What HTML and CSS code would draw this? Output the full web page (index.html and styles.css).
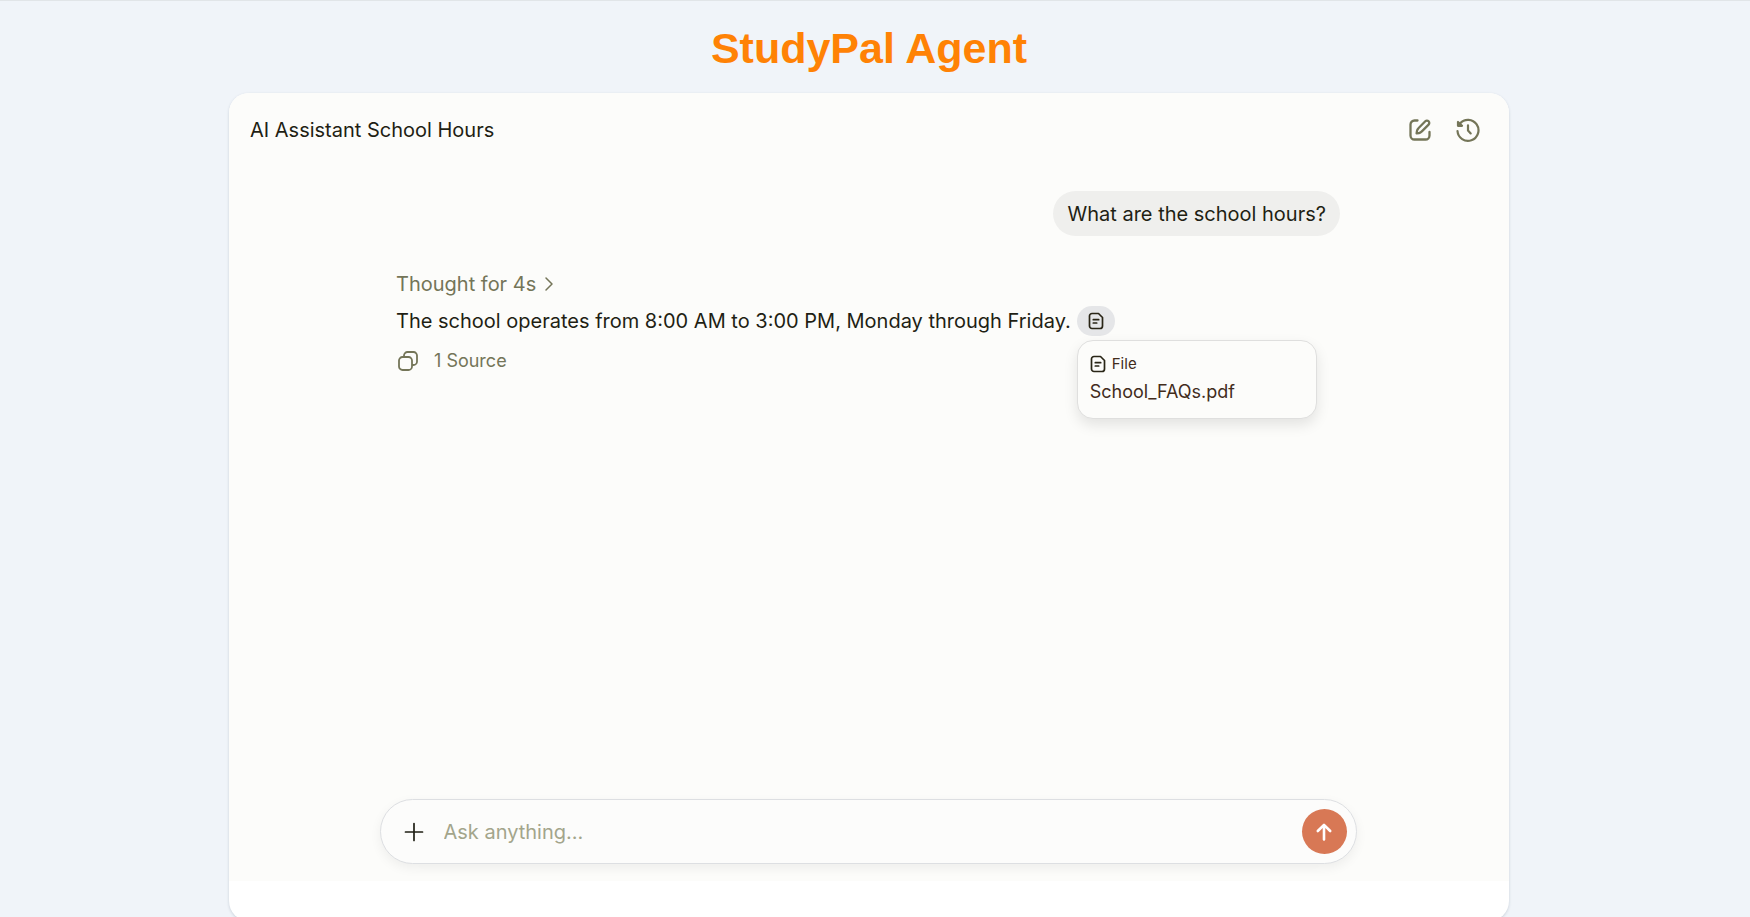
FILE: index.html
```html
<!DOCTYPE html>
<html lang="en">
<head>
<meta charset="utf-8">
<meta name="viewport" content="width=device-width, initial-scale=1">
<title>StudyPal Agent</title>
<link rel="stylesheet" href="styles.css">
</head>
<body>
<div class="page">
  <h1 class="page-title">StudyPal Agent</h1>
  <main class="card">
    <div class="chat">
      <header class="chat-header">
        <h2 class="chat-title">AI Assistant School Hours</h2>
        <div class="chat-actions">
          <button class="icon-button" type="button" aria-label="New chat">
            <svg width="24" height="24" viewBox="0 0 24 24" fill="none" stroke="currentColor" stroke-width="2.300" stroke-linecap="round" stroke-linejoin="round"><path d="M9.500 2.500H6.500a4 4 0 0 0-4 4v11a4 4 0 0 0 4 4h11a4 4 0 0 0 4-4v-3.500"/><path d="M17.300 3.300a2.300 2.300 0 0 1 3.300 3.300L13.600 13.600a4.500 4.500 0 0 1-2.500 1.400L8.600 15.400l.4-2.500a4.500 4.500 0 0 1 1.400-2.600Z"/></svg>
          </button>
          <button class="icon-button" type="button" aria-label="Chat history">
            <svg width="24" height="24" viewBox="0 0 24 24" fill="none" stroke="currentColor" stroke-width="2.200" stroke-linecap="round" stroke-linejoin="round"><path d="M1.500 13a10.500 10.500 0 1 0 2.500-7.500"/><path d="M2 4v3.800h4z" fill="currentColor"/><path d="M12 7.300v5.200l2.700 2.900"/></svg>
          </button>
        </div>
      </header>
      <section class="thread">
        <p class="bubble">What are the school hours?</p>
        <article class="reply">
          <button class="thought" type="button">Thought for 4s
            <svg width="10" height="16" viewBox="0 0 10 16" fill="none" stroke="currentColor" stroke-width="1.500" stroke-linecap="round" stroke-linejoin="round"><path d="M2 2l6 6-6 6"/></svg>
          </button>
          <div class="answer">
            <p class="answer-text">The school operates from 8:00 AM to 3:00 PM, Monday through Friday.</p>
            <div class="citation">
              <button class="chip" type="button" aria-label="Source file">
                <svg class="file-icon" width="16" height="18" viewBox="0 0 16 18" fill="none" stroke="currentColor" stroke-width="1.700" stroke-linecap="round" stroke-linejoin="round"><path d="M4 1.500h6.500l4 4V14a2.500 2.500 0 0 1-2.500 2.500H4A2.500 2.500 0 0 1 1.500 14V4A2.500 2.500 0 0 1 4 1.500Z"/><path d="M5.300 7.700h5.400M5.300 11h3.400"/></svg>
              </button>
              <div class="popover">
                <div class="popover-kind">
                  <svg class="file-icon" width="16" height="18" viewBox="0 0 16 18" fill="none" stroke="currentColor" stroke-width="1.700" stroke-linecap="round" stroke-linejoin="round"><path d="M4 1.500h6.500l4 4V14a2.500 2.500 0 0 1-2.500 2.500H4A2.500 2.500 0 0 1 1.500 14V4A2.500 2.500 0 0 1 4 1.500Z"/><path d="M5.300 7.700h5.400M5.300 11h3.400"/></svg>
                  File
                </div>
                <div class="popover-name">School_FAQs.pdf</div>
              </div>
            </div>
          </div>
          <div class="reply-tools">
            <button class="tool-button" type="button" aria-label="Copy">
              <svg width="20" height="20" viewBox="0 0 20 20" fill="none" stroke="currentColor" stroke-width="1.800" stroke-linejoin="round"><rect x="1" y="6" width="13" height="13" rx="3.500"/><path d="M6 6V4.500A3.500 3.500 0 0 1 9.500 1h6A3.500 3.500 0 0 1 19 4.500v6a3.500 3.500 0 0 1-3.500 3.500H14"/></svg>
            </button>
            <button class="tool-button" type="button">1 Source</button>
          </div>
        </article>
      </section>
      <form class="composer">
        <button class="add" type="button" aria-label="Add attachment">
          <svg width="20" height="20" viewBox="0 0 20 20" fill="none" stroke="currentColor" stroke-width="1.700" stroke-linecap="round"><path d="M10 1.500v17M1.500 10h17"/></svg>
        </button>
        <input class="prompt" type="text" placeholder="Ask anything..." aria-label="Message">
        <button class="send" type="button" aria-label="Send">
          <svg width="20" height="20" viewBox="0 0 20 20" fill="none" stroke="currentColor" stroke-width="2.600" stroke-linecap="round" stroke-linejoin="round"><path d="M10 17.500V3M3.800 9L10 2.800 16.200 9"/></svg>
        </button>
      </form>
    </div>
  </main>
</div>
</body>
</html>
```
FILE: styles.css
```css
* {
  box-sizing: border-box;
}

body {
  margin: 0;
  background: #f0f4f9;
  color: #1f1f14;
  font-family: Inter, "Liberation Sans", sans-serif;
  font-size: 20px;
  line-height: 28px;
  overflow: hidden;
}

h1, h2, p {
  margin: 0;
}

button {
  display: flex;
  align-items: center;
  justify-content: center;
  padding: 0;
  border: 0;
  background: none;
  color: inherit;
  font: inherit;
  cursor: pointer;
}

svg {
  display: block;
  flex: none;
}

.page {
  display: flex;
  flex-direction: column;
  align-items: center;
  min-height: 100vh;
  padding: 23px 12px 0 0;
  border-top: 1px solid #e1e5e8;
}

.page-title {
  margin-bottom: 21px;
  color: #ff8205;
  font-family: "Liberation Sans", Arial, sans-serif;
  font-size: 43px;
  font-weight: 700;
  line-height: 48px;
}

.card {
  width: 100%;
  max-width: 1280px;
  padding-bottom: 40px;
  border-radius: 20px;
  background: #fff;
  box-shadow: 0 1px 3px rgba(30, 50, 80, 0.18);
  overflow: hidden;
}

.chat {
  display: flex;
  flex-direction: column;
  min-height: 788px;
  padding: 0 2px 17px 0;
  background: #fcfcfa;
}

.chat-header {
  display: flex;
  align-items: center;
  justify-content: space-between;
  height: 74px;
  padding: 0 19px 0 21px;
}

.chat-title {
  font-size: 20px;
  font-weight: 400;
}

.chat-actions {
  display: flex;
  gap: 8px;
}

.icon-button {
  width: 40px;
  height: 40px;
  color: #747558;
}

.thread {
  display: flex;
  flex: 1;
  flex-direction: column;
  width: 100%;
  max-width: 944px;
  margin: 0 auto;
  padding-top: 24px;
}

.bubble {
  align-self: flex-end;
  padding: 9px 14px 8px;
  border-radius: 23px;
  background: #efefed;
}

.reply {
  display: flex;
  flex-direction: column;
  align-items: flex-start;
  gap: 8px;
  padding-top: 34px;
}

.thought {
  gap: 8px;
  color: #747558;
}

.answer {
  display: flex;
  align-items: center;
  gap: 6px;
}

.citation {
  position: relative;
}

.chip {
  width: 38px;
  height: 30px;
  border-radius: 15px;
  background: #e5e6e8;
}

.popover {
  position: absolute;
  top: 100%;
  left: 0;
  width: 240px;
  margin-top: 4px;
  padding: 11px 12px 12px;
  border: 1px solid #dfdfde;
  border-radius: 16px;
  background: #fcfcfa;
  box-shadow: 0 6px 14px rgba(0, 0, 0, 0.1);
  color: #422c1c;
}

.popover-kind {
  display: flex;
  align-items: center;
  gap: 6px;
  font-size: 15px;
  line-height: 24px;
}

.popover-name {
  margin-top: 2px;
  font-size: 18px;
  line-height: 28px;
}

.file-icon {
  color: #292516;
}

.reply-tools {
  display: flex;
  align-items: center;
  gap: 16px;
  padding: 3px 0 0 2px;
  color: #747558;
  font-size: 18px;
}

.composer {
  display: flex;
  align-items: center;
  width: 100%;
  max-width: 977px;
  height: 65px;
  margin: 0 auto;
  padding: 0 9px 0 12px;
  border: 1px solid #dddfe2;
  border-radius: 33px;
  background: #fcfcfb;
  box-shadow: 0 4px 12px rgba(0, 0, 0, 0.06);
}

.add {
  width: 42px;
  height: 42px;
  color: #1f1f14;
}

.prompt {
  flex: 1;
  min-width: 0;
  padding: 0 9px;
  border: 0;
  outline: 0;
  background: none;
  color: inherit;
  font: inherit;
}

.prompt::placeholder {
  color: #a3a58b;
  opacity: 1;
}

.send {
  width: 45px;
  height: 45px;
  border-radius: 50%;
  background: #d87855;
  color: #fff;
}
```
